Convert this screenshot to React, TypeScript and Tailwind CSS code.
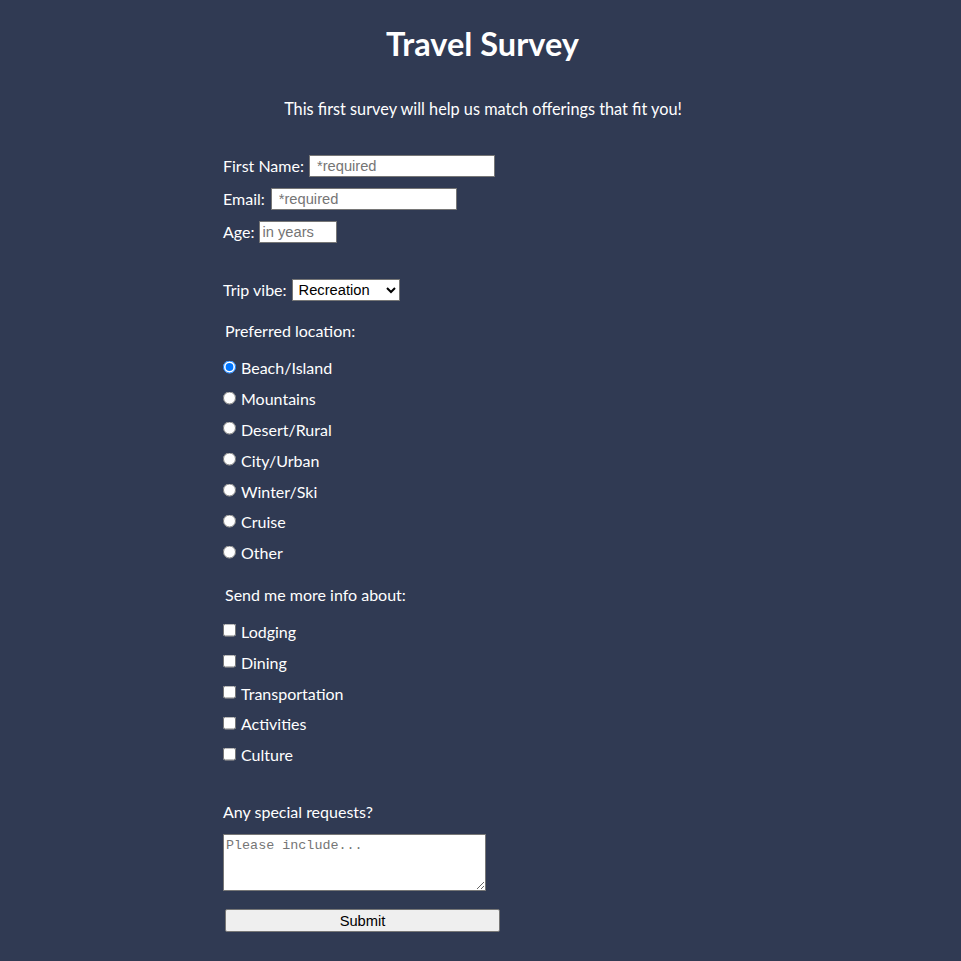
import { useState } from "react";

const locations = ["Beach/Island", "Mountains", "Desert/Rural", "City/Urban", "Winter/Ski", "Cruise", "Other"];
const topics = ["Lodging", "Dining", "Transportation", "Activities", "Culture"];

const field =
  "h-[22px] bg-white border border-[#767676] px-[2px] text-[14.7px] text-black font-['Liberation_Sans',Arial,sans-serif] placeholder:text-[#757575] outline-none";

export default function App() {
  const [location, setLocation] = useState("Beach/Island");

  return (
    <div className="min-h-[961px] bg-[#303a53] text-white font-['Lato',sans-serif] text-[16px]">
      <div className="w-[515px] mx-auto">
        <h1 className="pt-[24px] pl-[4px] h-[64px] leading-[40px] text-center text-[32.5px] font-bold">Travel Survey</h1>

        <p className="mt-[33px] pl-[5px] h-[24px] leading-[24px] text-center text-[16.3px]">
          This first survey will help us match offerings that fit you!
        </p>

        {/* Contact */}
        <div className="mt-[28px]">
          <div className="flex items-center h-[33px]">
            <label>First Name:</label>
            <input className={`${field} ml-[5px] w-[186px] pl-[7px] pt-[1px]`} placeholder="*required" />
          </div>
          <div className="flex items-center h-[33px]">
            <label>Email:</label>
            <input className={`${field} ml-[6px] w-[186px] pl-[7px] pt-[1px]`} placeholder="*required" />
          </div>
          <div className="flex items-center h-[33px]">
            <label>Age:</label>
            <input className={`${field} ml-[5px] w-[78px] pt-[1px]`} placeholder="in years" />
          </div>
        </div>

        <div className="mt-[30px] flex items-center h-[24px]">
          <label>Trip vibe:</label>
          <select className={`${field} ml-[5px] w-[108px] h-[21px] px-0`} defaultValue="Recreation">
            <option>Recreation</option>
            <option>Adventure</option>
            <option>Relaxation</option>
          </select>
        </div>

        {/* Location */}
        <p className="mt-[17px] h-[24px] leading-[24px] pl-[2px]">Preferred location:</p>
        <div className="mt-[10px]">
          {locations.map((loc) => (
            <label key={loc} className="flex items-center h-[30.8px]">
              <input
                type="radio"
                name="location"
                checked={location === loc}
                onChange={() => setLocation(loc)}
                className="m-0 w-[13px] h-[13px] -translate-y-[1.5px]"
              />
              <span className="ml-[5px]">{loc}</span>
            </label>
          ))}
        </div>

        {/* Info */}
        <p className="mt-[14px] h-[24px] leading-[24px] pl-[2px]">Send me more info about:</p>
        <div className="mt-[10px]">
          {topics.map((t) => (
            <label key={t} className="flex items-center h-[30.8px]">
              <input type="checkbox" className="m-0 w-[13px] h-[13px] -translate-y-[1.5px]" />
              <span className="ml-[5px]">{t}</span>
            </label>
          ))}
        </div>

        <p className="mt-[29px] h-[24px] leading-[24px]">Any special requests?</p>
        <textarea
          className="mt-[10px] block w-[263px] h-[57px] bg-white border border-[#767676] px-[2px] py-[1px] text-[13.4px] text-black font-['Liberation_Mono',monospace] placeholder:text-[#757575] outline-none"
          placeholder="Please include..."
        />

        <button className="mt-[18px] ml-[2px] block w-[275px] h-[23px] bg-[#efefef] border border-[#767676] rounded-[2px] text-[14.7px] text-black font-['Liberation_Sans',Arial,sans-serif]">
          Submit
        </button>
      </div>
    </div>
  );
}
